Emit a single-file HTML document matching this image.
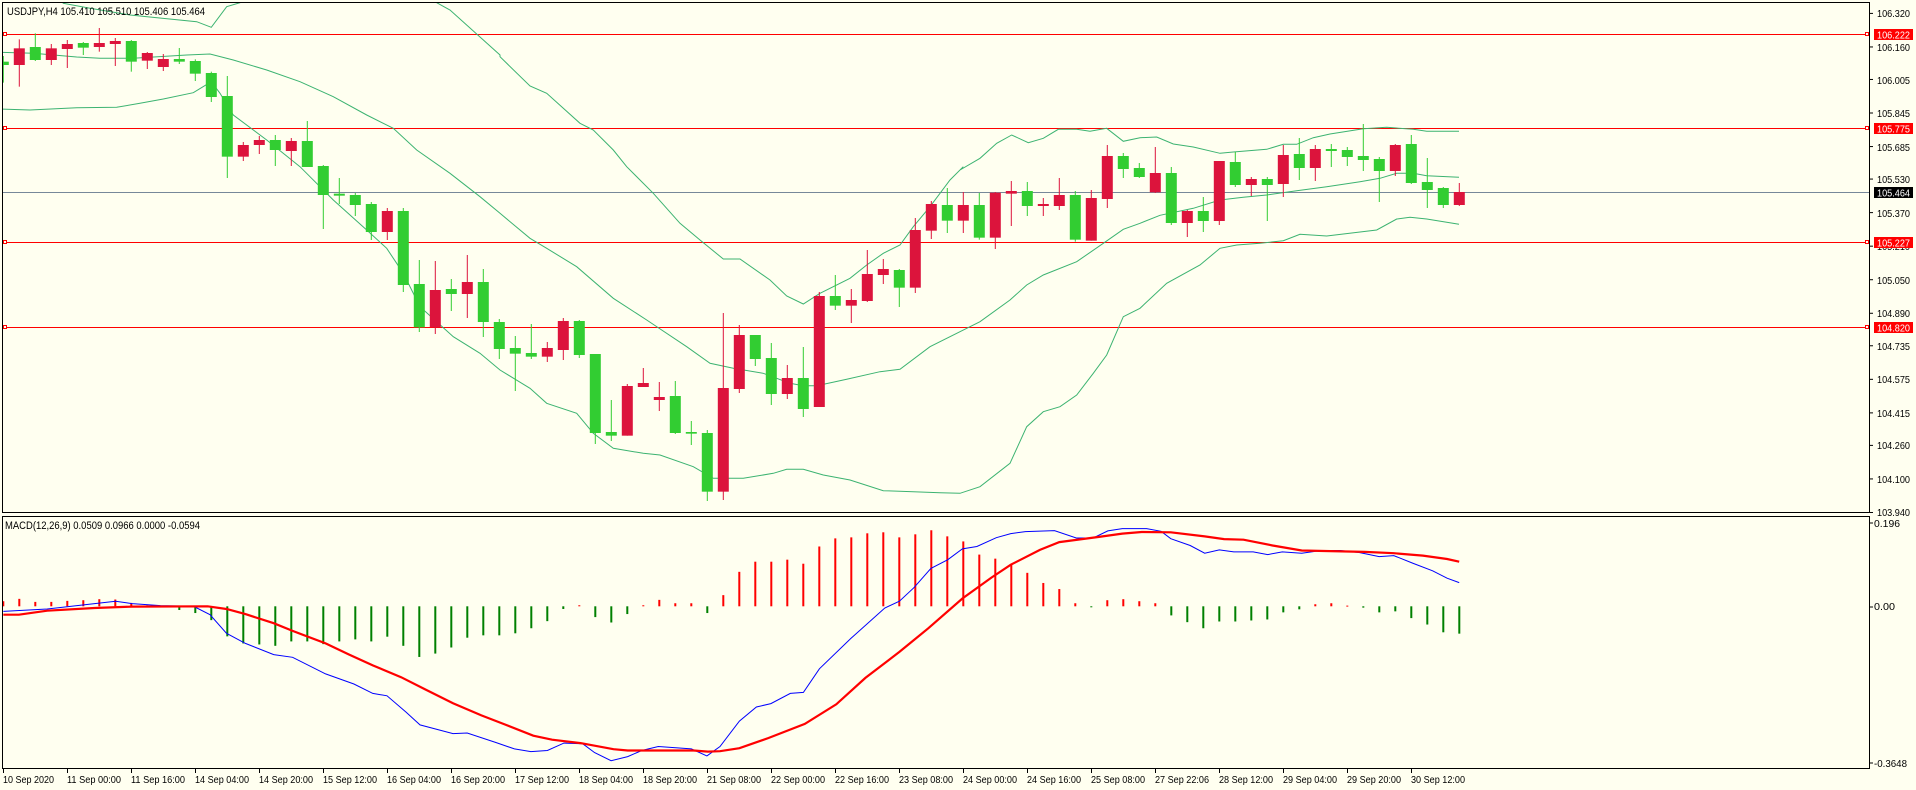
<!DOCTYPE html>
<html><head><meta charset="utf-8"><style>
html,body{margin:0;padding:0;background:#FFFFF0;}
svg{display:block;}
text{font-family:"Liberation Sans",sans-serif;font-size:11px;fill:#000;}
#plabels text,.pl{font-size:10.5px;}
#tl text{font-size:10.5px;}
</style></head><body>
<svg id="s" width="1916" height="790" viewBox="0 0 1916 790" xmlns="http://www.w3.org/2000/svg">
<rect x="0" y="0" width="1916" height="790" fill="#FFFFF0"/>
<defs>
<clipPath id="cm"><rect x="3" y="3" width="1866" height="509"/></clipPath>
<clipPath id="cd"><rect x="3" y="517" width="1866" height="251"/></clipPath>
</defs>
<g id="main" clip-path="url(#cm)"></g>
<g id="macd" clip-path="url(#cd)"></g>
<g id="frame" fill="none" stroke="#000" stroke-width="1">
<rect x="2.5" y="2.5" width="1867" height="510"/>
<rect x="2.5" y="516.5" width="1867" height="252"/>
</g>
<g id="ticks"></g>
<text x="7" y="15" textLength="198" lengthAdjust="spacingAndGlyphs">USDJPY,H4  105.410 105.510 105.406 105.464</text>
<text x="5" y="529" font-size="10" textLength="195" lengthAdjust="spacingAndGlyphs">MACD(12,26,9) 0.0509 0.0966 0.0000 -0.0594</text>
<g id="plabels">
<text x="1877" y="17" textLength="33" lengthAdjust="spacingAndGlyphs">106.320</text>
<text x="1877" y="51" textLength="33" lengthAdjust="spacingAndGlyphs">106.160</text>
<text x="1877" y="84" textLength="33" lengthAdjust="spacingAndGlyphs">106.005</text>
<text x="1877" y="117" textLength="33" lengthAdjust="spacingAndGlyphs">105.845</text>
<text x="1877" y="151" textLength="33" lengthAdjust="spacingAndGlyphs">105.685</text>
<text x="1877" y="183" textLength="33" lengthAdjust="spacingAndGlyphs">105.530</text>
<text x="1877" y="217" textLength="33" lengthAdjust="spacingAndGlyphs">105.370</text>
<text x="1877" y="250" textLength="33" lengthAdjust="spacingAndGlyphs">105.210</text>
<text x="1877" y="284" textLength="33" lengthAdjust="spacingAndGlyphs">105.050</text>
<text x="1877" y="317" textLength="33" lengthAdjust="spacingAndGlyphs">104.890</text>
<text x="1877" y="350" textLength="33" lengthAdjust="spacingAndGlyphs">104.735</text>
<text x="1877" y="383" textLength="33" lengthAdjust="spacingAndGlyphs">104.575</text>
<text x="1877" y="417" textLength="33" lengthAdjust="spacingAndGlyphs">104.415</text>
<text x="1877" y="449" textLength="33" lengthAdjust="spacingAndGlyphs">104.260</text>
<text x="1877" y="483" textLength="33" lengthAdjust="spacingAndGlyphs">104.100</text>
<text x="1877" y="516" textLength="33" lengthAdjust="spacingAndGlyphs">103.940</text>
</g>
<rect x="1874" y="29" width="39" height="11" fill="#FF0000"/>
<rect x="1874" y="123" width="39" height="11" fill="#FF0000"/>
<rect x="1874" y="187" width="39" height="11" fill="#000"/>
<rect x="1874" y="237" width="39" height="11" fill="#FF0000"/>
<rect x="1874" y="322" width="39" height="11" fill="#FF0000"/>
<text class="pl" x="1877" y="38.5" style="fill:#fff" textLength="33" lengthAdjust="spacingAndGlyphs">106.222</text>
<text class="pl" x="1877" y="132.5" style="fill:#fff" textLength="33" lengthAdjust="spacingAndGlyphs">105.775</text>
<text class="pl" x="1877" y="196.5" style="fill:#fff" textLength="33" lengthAdjust="spacingAndGlyphs">105.464</text>
<text class="pl" x="1877" y="246.5" style="fill:#fff" textLength="33" lengthAdjust="spacingAndGlyphs">105.227</text>
<text class="pl" x="1877" y="331.5" style="fill:#fff" textLength="33" lengthAdjust="spacingAndGlyphs">104.820</text>
<text class="pl" x="1874" y="527" textLength="26" lengthAdjust="spacingAndGlyphs">0.196</text>
<text class="pl" x="1874" y="610" textLength="21" lengthAdjust="spacingAndGlyphs">0.00</text>
<text class="pl" x="1874" y="767" textLength="33" lengthAdjust="spacingAndGlyphs">-0.3648</text>
<g id="tl">
<text x="3" y="783" textLength="51" lengthAdjust="spacingAndGlyphs">10 Sep 2020</text>
<text x="67" y="783" textLength="54" lengthAdjust="spacingAndGlyphs">11 Sep 00:00</text>
<text x="131" y="783" textLength="54" lengthAdjust="spacingAndGlyphs">11 Sep 16:00</text>
<text x="195" y="783" textLength="54" lengthAdjust="spacingAndGlyphs">14 Sep 04:00</text>
<text x="259" y="783" textLength="54" lengthAdjust="spacingAndGlyphs">14 Sep 20:00</text>
<text x="323" y="783" textLength="54" lengthAdjust="spacingAndGlyphs">15 Sep 12:00</text>
<text x="387" y="783" textLength="54" lengthAdjust="spacingAndGlyphs">16 Sep 04:00</text>
<text x="451" y="783" textLength="54" lengthAdjust="spacingAndGlyphs">16 Sep 20:00</text>
<text x="515" y="783" textLength="54" lengthAdjust="spacingAndGlyphs">17 Sep 12:00</text>
<text x="579" y="783" textLength="54" lengthAdjust="spacingAndGlyphs">18 Sep 04:00</text>
<text x="643" y="783" textLength="54" lengthAdjust="spacingAndGlyphs">18 Sep 20:00</text>
<text x="707" y="783" textLength="54" lengthAdjust="spacingAndGlyphs">21 Sep 08:00</text>
<text x="771" y="783" textLength="54" lengthAdjust="spacingAndGlyphs">22 Sep 00:00</text>
<text x="835" y="783" textLength="54" lengthAdjust="spacingAndGlyphs">22 Sep 16:00</text>
<text x="899" y="783" textLength="54" lengthAdjust="spacingAndGlyphs">23 Sep 08:00</text>
<text x="963" y="783" textLength="54" lengthAdjust="spacingAndGlyphs">24 Sep 00:00</text>
<text x="1027" y="783" textLength="54" lengthAdjust="spacingAndGlyphs">24 Sep 16:00</text>
<text x="1091" y="783" textLength="54" lengthAdjust="spacingAndGlyphs">25 Sep 08:00</text>
<text x="1155" y="783" textLength="54" lengthAdjust="spacingAndGlyphs">27 Sep 22:06</text>
<text x="1219" y="783" textLength="54" lengthAdjust="spacingAndGlyphs">28 Sep 12:00</text>
<text x="1283" y="783" textLength="54" lengthAdjust="spacingAndGlyphs">29 Sep 04:00</text>
<text x="1347" y="783" textLength="54" lengthAdjust="spacingAndGlyphs">29 Sep 20:00</text>
<text x="1411" y="783" textLength="54" lengthAdjust="spacingAndGlyphs">30 Sep 12:00</text>
</g>
</svg>
<script>
(function(){
var NS="http://www.w3.org/2000/svg";
function el(p,n,a){var e=document.createElementNS(NS,n);for(var k in a)e.setAttribute(k,a[k]);p.appendChild(e);return e;}
var M=document.getElementById('main'),D=document.getElementById('macd'),T=document.getElementById('ticks');
[34,128,242,327].forEach(function(y){
 el(M,'line',{x1:3,y1:y+.5,x2:1869,y2:y+.5,stroke:'#FF0000','stroke-width':1});
 el(T,'rect',{x:3.5,y:y-1.5,width:3,height:3,fill:'#FFFFF0',stroke:'#FF0000','stroke-width':1});
 el(T,'rect',{x:1865.5,y:y-1.5,width:3,height:3,fill:'#FFFFF0',stroke:'#FF0000','stroke-width':1});
});
el(M,'line',{x1:3,y1:192.5,x2:1869,y2:192.5,stroke:'#778899','stroke-width':1});
function pts(arr){return arr.map(function(p){return p[0].toFixed(1)+','+p[1].toFixed(1)}).join(' ');}
function conv(list){var o=[];list.forEach(function(seg){var off=seg[0];seg[1].forEach(function(p){o.push([off+p[0]/3,p[1]/3]);});});return o;}
var up=conv([[0,[[100,-90],[190,10],[270,25],[390,45],[590,65],[634,82],[680,20],[720,8],[760,-90],[1290,-90],[1310,8],[1350,30],[1500,165]]],
[480,[[60,170],[150,258],[200,280],[300,370],[340,390],[400,450],[440,500],[520,580],[600,670],[660,720],[730,777],[780,777],[870,840],[920,888],[970,912],[1020,880],[1110,835],[1160,795],[1210,760],[1260,735],[1300,680],[1350,620],[1410,540],[1450,500]]],
[960,[[0,510],[60,475],[110,430],[155,405],[205,428],[250,415],[295,388],[350,388],[390,394],[440,385],[490,424],[540,413],[590,411],[640,432],[700,441],[780,460],[820,456],[920,448],[970,433],[1010,433],[1060,413],[1110,402],[1210,386],[1280,382],[1360,388],[1400,394],[1497,394]]]]);
var mid=conv([[0,[[0,157],[100,160],[230,171],[300,175],[400,175],[560,165],[630,162],[700,180],[800,210],[900,245],[1000,290],[1100,345],[1180,385],[1250,450],[1350,520],[1440,590]]],
[480,[[60,640],[150,715],[200,745],[290,800],[400,895],[500,960],[620,1040],[690,1090],[760,1105],[850,1120],[930,1150],[970,1157],[1010,1157],[1100,1138],[1200,1115],[1260,1108],[1350,1040],[1440,995]]],
[960,[[60,965],[150,900],[200,855],[250,825],[350,785],[430,730],[490,688],[540,670],[600,646],[700,625],[780,600],[850,592],[920,585],[1010,572],[1100,560],[1200,545],[1260,535],[1310,520],[1360,520],[1400,527],[1497,532]]]]);
var lo=conv([[0,[[0,327],[90,330],[230,323],[350,322],[420,310],[490,297],[580,278],[634,245],[660,280],[700,345],[800,420],[900,500],[1000,600],[1100,690],[1160,745],[1210,820],[1260,920],[1360,1010],[1440,1060]]],
[480,[[60,1110],[150,1165],[200,1210],[290,1240],[340,1300],[400,1345],[490,1360],[540,1365],[640,1400],[700,1435],[790,1435],[880,1420],[920,1408],[970,1408],[1030,1425],[1110,1440],[1210,1472],[1300,1475],[1380,1478],[1440,1480]]],
[960,[[60,1460],[150,1390],[200,1280],[250,1235],[300,1220],[350,1185],[400,1120],[440,1065],[490,950],[540,925],[620,850],[720,795],[780,745],[830,735],[900,730],[970,722],[1020,703],[1100,708],[1250,690],[1310,657],[1350,652],[1400,657],[1497,673]]]]);
[up,mid,lo].forEach(function(a){el(M,'polyline',{points:pts(a),fill:'none',stroke:'#3CB371','stroke-width':1});});
var C=[['g',185,195,168,248],['r',145,195,118,260],['g',141,180,100,183],['r',145,180,132,195],['r',132,147,120,204],['g',129,143,126,165],['r',129,141,84,155],['r',123,132,114,198],['g',123,185,120,215],['r',159,182,156,207],['r',177,201,162,213],['g',177,185,144,192],['g',183,221,178,243],['g',219,291,215,306],['g',288,470,228,534],['r',435,470,426,483],['r',420,435,408,462],['g',420,450,405,498],['r',423,453,414,498],['g',423,501,363,501],['g',498,585,495,687],['g',581,587,534,612],['g',585,615,579,648],['g',612,696,606,720],['r',633,696,624,720],['g',633,855,624,876],['g',852,982,780,996],['r',870,982,783,1002],['g',867,882,837,933],['r',846,882,765,954],['g',846,966,807,1011],
['g',966,1047,957,1077],['g',1044,1061,1008,1173],['g',1059,1070,972,1077],['r',1044,1070,1026,1086],['r',963,1050,954,1080],['g',963,1065,960,1074],['g',1062,1299,1062,1332],['g',1296,1307,1200,1323],['r',1158,1307,1152,1307],['r',1149,1161,1104,1161],['r',1191,1200,1146,1233],['g',1188,1299,1143,1302],['g',1296,1301,1263,1335],['g',1299,1475,1290,1503],['r',1164,1475,939,1500],['r',1005,1167,975,1179],['g',1005,1077,1005,1098],['g',1074,1182,1029,1215],['r',1134,1182,1095,1197],['g',1134,1227,1041,1251],['r',888,1221,876,1221],['g',888,917,825,930],['r',900,917,867,969],['r',822,903,750,906],['r',807,825,777,852],['g',810,863,807,921],['r',690,863,654,879],['r',612,692,603,717],['g',615,662,564,699],['r',615,662,576,699],
['g',615,713,579,719],['r',578,713,576,747],['r',573,581,543,678],['g',573,618,546,648],['r',612,618,594,648],['r',585,618,534,630],['g',585,719,573,725],['r',594,722,570,722],['r',468,597,435,624],['g',468,507,459,534],['g',504,531,489,534],['r',519,577,441,579],['g',519,669,501,675],['r',633,669,630,711],['g',633,663,591,696],['r',483,663,483,675],['g',486,555,456,561],['r',537,555,531,588],['g',537,555,531,663],['r',465,552,435,591],['g',462,504,414,540],['r',447,504,435,543],['g',447,453,432,501],['g',450,471,441,498],['g',468,480,372,513],['g',477,513,471,606],['r',435,513,432,528],['g',432,549,405,552],['g',546,570,474,624],['g',564,615,561,624],['r',576,615,549,618]];
C.forEach(function(c,i){
 var x=3.3+16*i,col=c[0]=='g'?'#32CD32':'#DC143C';
 el(M,'line',{x1:x,y1:c[3]/3,x2:x,y2:c[4]/3,stroke:col,'stroke-width':1});
 var t=c[1]/3,b=c[2]/3;if(b-t<1.5)b=t+1.5;
 el(M,'rect',{x:x-5.5,y:t,width:11,height:b-t,fill:col});
});
var H=[270,263,272,272,269,267,264,265,275,282,287,296,305,326,374,395,398,402,389,389,397,389,383,389,375,402,435,425,407,378,371,371,365,350,329,293,282,317,333,308,282,266,276,276,305,252,183,153,153,147,159,108,84,81,69,66,81,72,60,78,93,132,144,162,186,216,234,276,287,267,264,270,276,312,332,350,330,330,327,324,303,294,279,276,283,289,303,300,320,339,362,366];
var Z=606.3;
H.forEach(function(h,i){
 var x=3.3+16*i,y=510+h/2.96,col=y<Z?'#FF0000':'#008000';
 el(D,'rect',{x:x-1,y:Math.min(y,Z),width:2,height:Math.max(1,Math.abs(y-Z)),fill:col});
});
function cv(list){var o=[];list.forEach(function(seg){var off=seg[0],s=seg[1];seg[2].forEach(function(p){o.push([off+p[0]/s,510+p[1]/2.96]);});});return o;}
var blue=cv([[0,2.119,[[7,300],[100,293],[245,270],[280,277],[340,283],[410,285],[445,310],[480,365],[520,395],[580,428],[620,436],[690,485],[750,515],[790,543],[820,550],[860,598],[890,636],[960,662],[990,660],[1050,688],[1090,707],[1125,715],[1160,712],[1195,690],[1235,692],[1260,718],[1295,742],[1330,730],[1360,712],[1395,700],[1465,707],[1498,728]]],
[720,2.063,[[0,700],[40,625],[75,583],[105,573],[145,543],[172,540],[205,470],[270,380],[340,290],[370,270],[400,230],[435,173],[470,147],[500,115],[530,108],[570,82],[600,70],[630,64],[690,61],[735,83],[770,83],[800,62],[830,55],[880,55],[910,63],[930,85],[970,105],[1000,128],[1030,118],[1060,124],[1100,124],[1130,132],[1160,124],[1200,128],[1240,120],[1280,120],[1320,126],[1360,138],[1390,135],[1430,158],[1470,180],[1500,202],[1525,215]]]]);
var red=cv([[0,2.119,[[7,310],[40,310],[100,298],[200,290],[280,286],[440,285],[480,293],[520,308],[580,335],[620,358],[690,395],[740,428],[790,460],[850,495],[900,530],[960,572],[1020,608],[1070,635],[1130,668],[1170,680],[1230,690],[1300,708],[1330,712],[1470,712],[1500,715]]],
[720,2.063,[[0,714],[40,705],[100,675],[175,633],[240,575],[300,497],[370,420],[430,350],[500,262],[560,200],[600,162],[660,118],[700,95],[780,80],[830,70],[870,65],[930,66],[1000,78],[1040,86],[1080,88],[1140,105],[1200,120],[1330,124],[1390,128],[1450,135],[1500,145],[1525,153]]]]);
el(D,'polyline',{points:pts(blue),fill:'none',stroke:'#0000FF','stroke-width':1});
el(D,'polyline',{points:pts(red),fill:'none',stroke:'#FF0000','stroke-width':2.2});
[106.320,106.160,106.005,105.845,105.685,105.530,105.370,105.210,105.050,104.890,104.735,104.575,104.415,104.260,104.100,103.940].forEach(function(p){
 var y=13.4+(106.320-p)*209.7;el(T,'line',{x1:1870,y1:y,x2:1873,y2:y,stroke:'#000'});});
[523,607,763].forEach(function(y){el(T,'line',{x1:1870,y1:y,x2:1873,y2:y,stroke:'#000'});});
for(var k=0;k<23;k++){var x=3.5+64*k;el(T,'line',{x1:x,y1:769,x2:x,y2:773,stroke:'#000'});}
})();
</script>
</body></html>
